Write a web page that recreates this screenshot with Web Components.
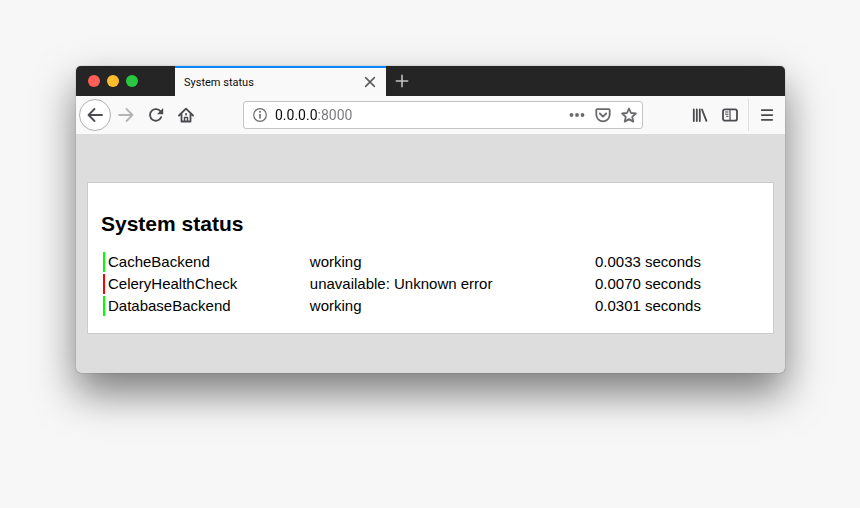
<!DOCTYPE html>
<html lang="en">
<head>
<meta charset="utf-8">
<title>System status</title>
<style>
  body {
    box-sizing: border-box;
    min-height: 100vh;
    margin: 0;
    padding: 66px 75px 80px 76px;
    background: #f7f7f7;
    font-family: "Liberation Sans", Arial, sans-serif;
  }
</style>
</head>
<body>
<browser-window>
  <tab-strip slot="tabs" label="System status"></tab-strip>
  <nav-toolbar slot="toolbar" address="0.0.0.0:8000"></nav-toolbar>
  <status-page heading="System status"></status-page>
</browser-window>

<script>
(function () { 'use strict';

const ICONS = {
  close: '<path d="M3 3l10 10M13 3L3 13"/>',
  plus: '<path d="M8 1.5v13M1.5 8h13"/>',
  back: '<path d="M15 8H1.5M7.5 2L1.5 8l6 6"/>',
  forward: '<path d="M1 8h13.5M8.5 2l6 6-6 6"/>',
  reload: '<path d="M13.2 10.2A5.8 5.8 0 1 1 12.6 4.6"/><path d="M15.2 1v6.2H9z" fill="currentColor" stroke="none"/>',
  home: '<path d="M1 8.5L8 1.6l7 6.9M3.5 7.5v7h9v-7"/><path d="M6.5 14v-3.500h3V14" stroke-width="1.400"/><path d="M8 7v.5"/>',
  info: '<circle cx="8" cy="8" r="6.3" stroke-width="1.2"/><path d="M8 7.500v3.500" stroke-width="1.6"/><circle cx="8" cy="4.8" r="1" fill="currentColor" stroke="none"/>',
  dots: '<g fill="currentColor" stroke="none"><circle cx="2.5" cy="8" r="1.9"/><circle cx="8" cy="8" r="1.9"/><circle cx="13.5" cy="8" r="1.9"/></g>',
  pocket: '<path d="M2.2 2.2h11.6a.9.9 0 0 1 .9.9V7.6a6.7 6.7 0 0 1-13.4 0V3.1a.9.9 0 0 1 .9-.9z"/><path d="M4.8 6.5L8 9.6l3.2-3.1"/>',
  star: '<path d="M8 1.5l2 4.5 4.900.5-3.700 3.300 1.100 4.800L8 12.100l-4.300 2.500 1.100-4.800L1.100 6.500 6 6z"/>',
  library: '<path d="M1.8 2.500v11.500M4.8 2.500v11.500M7.8 2.500v11.500M10 2.500l4.400 11.300"/>',
  sidebar: '<rect x="1" y="2.3" width="14" height="11.4" rx="2"/><path d="M8 2.5v11" stroke-width="1.2"/><path d="M3.5 5h2.5M3.5 7.2h2.5M4.5 9.4h1.5" stroke-width="1"/>',
  menu: '<path d="M2 2.500h12M2 8h12M2 13.500h12" stroke-width="2"/>'
};

class UiIcon extends HTMLElement {
  constructor() {
    super();
    this.attachShadow({ mode: 'open' }).innerHTML = `
      <style>
        :host { display: block; width: 16px; height: 16px; }
        :host([small]) { width: 14px; height: 14px; }
        svg { display: block; width: 100%; height: 100%; }
      </style>
      <svg viewBox="0 0 16 16" fill="none" stroke="currentColor" stroke-width="1.8"
        stroke-linecap="round" stroke-linejoin="round" aria-hidden="true">${ ICONS[this.getAttribute('name')] }</svg>`;
  }
}

class BrowserWindow extends HTMLElement {
  constructor() {
    super();
    this.attachShadow({ mode: 'open' }).innerHTML = `
      <style>
        :host {
          display: block;
          border-radius: 5px;
          background: #ddd;
          box-shadow: 0 0 1px rgba(0, 0, 0, .6), 0 20px 40px rgba(0, 0, 0, .5);
        }
      </style>
      <slot name="tabs"></slot>
      <slot name="toolbar"></slot>
      <slot></slot>`;
  }
}

class TabStrip extends HTMLElement {
  constructor() {
    super();
    this.attachShadow({ mode: 'open' }).innerHTML = `
      <style>
        :host {
          display: flex;
          height: 30px;
          background: #252525;
          border-radius: 5px 5px 0 0;
          font: 11px Roboto, sans-serif;
        }
        .lights {
          display: flex;
          align-items: center;
          gap: 7px;
          padding: 0 37px 0 12px;
        }
        .lights button { width: 12px; height: 12px; border-radius: 50%; }
        button {
          padding: 0;
          border: 0;
          background: none;
          color: inherit;
        }
        .tab {
          display: flex;
          align-items: center;
          justify-content: space-between;
          box-sizing: border-box;
          width: 211px;
          padding: 0 9px;
          border-top: 2px solid #0a84ff;
          background: #f9f9f9;
          color: #0c0c0d;
        }
        .tab button { color: #5c5c5c; }
        .new { padding: 0 9px; color: #c4c4c4; }
      </style>
      <div class="lights">
        <button aria-label="Close window" style="background: #ff5f57"></button>
        <button aria-label="Minimize" style="background: #ffbd2e"></button>
        <button aria-label="Zoom" style="background: #28c940"></button>
      </div>
      <div class="tab">
        <span>${ this.getAttribute('label') }</span>
        <button aria-label="Close tab"><ui-icon name="close" small></ui-icon></button>
      </div>
      <button class="new" aria-label="New tab"><ui-icon name="plus" small></ui-icon></button>`;
  }
}

class NavToolbar extends HTMLElement {
  constructor() {
    super();
    this.attachShadow({ mode: 'open' }).innerHTML = `
      <style>
        :host {
          display: flex;
          align-items: center;
          height: 38px;
          padding: 0 3px;
          background: #f9f9f9;
          color: #4a4a4f;
        }
        button {
          display: flex;
          align-items: center;
          justify-content: center;
          flex: none;
          width: 30px;
          height: 30px;
          padding: 0;
          border: 0;
          background: none;
          color: inherit;
        }
        button:disabled { color: #b4b4b6; }
        .back {
          box-sizing: border-box;
          width: 32px;
          height: 32px;
          border: 1px solid #b1b1b1;
          border-radius: 50%;
          background: #fff;
        }
        .url {
          display: flex;
          align-items: center;
          flex: 1;
          box-sizing: border-box;
          min-width: 0;
          height: 28px;
          margin: 0 42px;
          border: 1px solid #c4c4c4;
          border-radius: 3px;
          background: #fff;
          color: #6a6a6e;
        }
        .url button { width: 26px; height: 26px; }
        .url button:first-child { width: 31px; }
        /* host in dark text, port in grey */
        input {
          flex: 1;
          min-width: 0;
          padding: 0;
          border: 0;
          outline: 0;
          background: linear-gradient(to right, #0c0c0d 42px, #77777b 42px);
          -webkit-background-clip: text;
          background-clip: text;
          color: transparent;
          font: 14px Roboto, sans-serif;
        }
        .divider { width: 1px; height: 32px; margin: 0 3px; background: #dedede; }
      </style>
      <button class="back" aria-label="Back"><ui-icon name="back"></ui-icon></button>
      <button disabled aria-label="Forward"><ui-icon name="forward"></ui-icon></button>
      <button aria-label="Reload"><ui-icon name="reload"></ui-icon></button>
      <button aria-label="Home"><ui-icon name="home"></ui-icon></button>
      <div class="url">
        <button aria-label="Site information"><ui-icon name="info"></ui-icon></button>
        <input type="text" aria-label="Address" value="${ this.getAttribute('address') }">
        <button aria-label="Page actions"><ui-icon name="dots"></ui-icon></button>
        <button aria-label="Save to Pocket"><ui-icon name="pocket"></ui-icon></button>
        <button aria-label="Bookmark this page"><ui-icon name="star"></ui-icon></button>
      </div>
      <button aria-label="Library"><ui-icon name="library"></ui-icon></button>
      <button aria-label="Sidebars"><ui-icon name="sidebar"></ui-icon></button>
      <span class="divider"></span>
      <button aria-label="Open menu"><ui-icon name="menu" small></ui-icon></button>`;
  }
}

class StatusPage extends HTMLElement {
  constructor() {
    super();
    this.checks = [
      { name: 'CacheBackend', ok: true, status: 'working', time: '0.0033' },
      { name: 'CeleryHealthCheck', ok: false, status: 'unavailable: Unknown error', time: '0.0070' },
      { name: 'DatabaseBackend', ok: true, status: 'working', time: '0.0301' }
    ];
    this.attachShadow({ mode: 'open' }).innerHTML = `
      <style>
        :host { display: block; padding: 48px 11px 39px; color: #000; }
        main {
          padding: 29px 13px 15px;
          border: 1px solid #ccc;
          background: #fff;
        }
        h1 { margin: 0 0 14px; font-size: 21px; line-height: 24px; }
        table {
          width: 100%;
          table-layout: fixed;
          border-spacing: 2px;
          font-size: 15px;
          line-height: 20px;
        }
        .name { width: 31%; }
        .status { width: 43.5%; }
        td { padding: 0 3px; }
        td:first-child { border-left: 2px solid #0f0; }
        .failed td:first-child { border-color: #f00; }
      </style>
      <main>
        <h1>${ this.getAttribute('heading') }</h1>
        <table>
          <colgroup><col class="name"><col class="status"><col></colgroup>
          <tbody>
            ${ this.checks.map(check => this._row(check)).join('') }
          </tbody>
        </table>
      </main>`;
  }

  _row(check) {
    return `<tr class="${ check.ok ? 'ok' : 'failed' }">
      <td>${ check.name }</td>
      <td>${ check.status }</td>
      <td>${ check.time } seconds</td>
    </tr>`;
  }
}

customElements.define('ui-icon', UiIcon);
customElements.define('browser-window', BrowserWindow);
customElements.define('tab-strip', TabStrip);
customElements.define('nav-toolbar', NavToolbar);
customElements.define('status-page', StatusPage);

})();
</script>
</body>
</html>
